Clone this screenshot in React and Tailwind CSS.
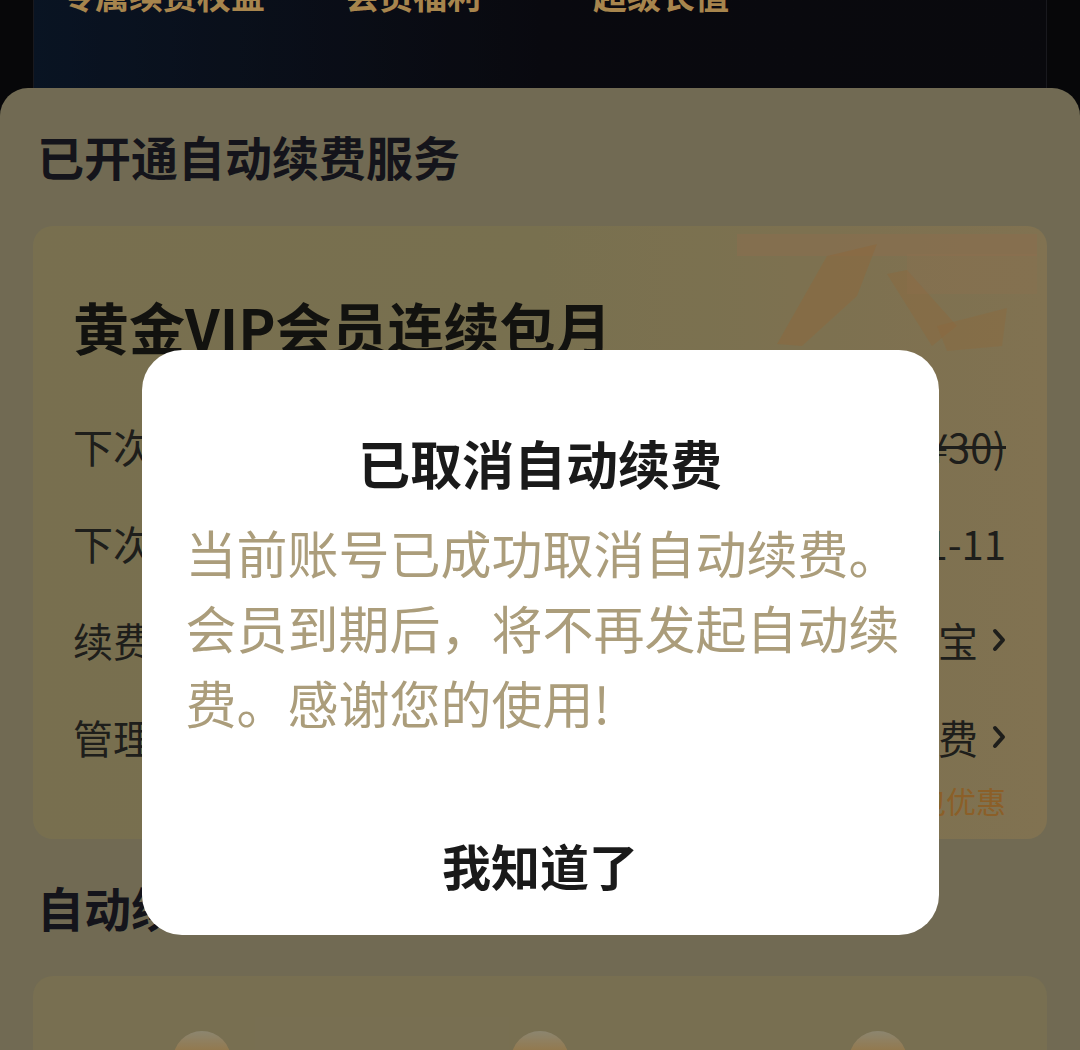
import React from 'react';

const rows = [
  { label: '下次续费金额', value: '¥25', strike: '(¥30)' },
  { label: '下次续费时间', value: '2025-01-11' },
  { label: '续费方式', value: '支付宝', arrow: true },
  { label: '管理自动续费', value: '取消自动续费', arrow: true },
];

const Chevron = () => (
  <svg width="14" height="24" viewBox="0 0 14 24" className="ml-[14px]">
    <polyline points="3,3 11,12 3,21" fill="none" stroke="#2b2b28" strokeWidth="4" strokeLinecap="round" strokeLinejoin="round" />
  </svg>
);

const CardDecor = () => (
  <svg width="340" height="140" viewBox="0 0 340 140" className="absolute right-0 top-0">
    <rect x="30" y="8" width="300" height="22" fill="#d09a70" opacity="0.35" />
    <polygon points="120,30 170,18 150,70 95,120 70,118" fill="#c8965a" opacity="0.55" />
    <polygon points="180,48 200,44 250,100 225,120" fill="#c8965a" opacity="0.5" />
    <polygon points="230,100 300,82 295,120 240,125" fill="#c8965a" opacity="0.45" />
    <rect x="200" y="28" width="130" height="40" fill="#d09a70" opacity="0.25" />
  </svg>
);

export default function App() {
  return (
    <div
      className="relative w-[1080px] h-[1050px] overflow-hidden bg-[#0b0b0e]"
      style={{ fontFamily: '"Noto Sans CJK SC", "Noto Sans", sans-serif' }}
    >
      {/* top banner (mostly scrolled off) */}
      <div className="h-[88px] px-[33px] overflow-hidden">
        <div className="h-[120px] overflow-hidden bg-gradient-to-r from-[#0e1d33] via-[#0e0e16] to-[#0e0e14] border-x border-[#24242c]">
          <div className="flex -mt-[22px] text-[34px] leading-[34px] font-bold text-[#f0bf6f]">
            <span className="ml-[27px]">专属续费权益</span>
            <span className="ml-[80px]">会员福利</span>
            <span className="ml-[112px]">超级长值</span>
          </div>
        </div>
      </div>

      {/* sheet */}
      <div className="relative rounded-t-[28px] bg-[#a29977] px-[33px] h-[1000px]">
        <h2 className="pt-[44px] pl-[4px] text-[47px] leading-[47px] font-bold text-[#1d1d28]">
          已开通自动续费服务
        </h2>

        <div className="relative mt-[47px] h-[613px] rounded-[20px] bg-gradient-to-r from-[#aca072] via-[#ada172] to-[#b9a474] pl-[40px] pr-[41px] overflow-hidden">
          <CardDecor />
          <div className="relative">
            <h3 className="pt-[72px] text-[56px] leading-[56px] font-bold text-[#1b1a16]">黄金VIP会员连续包月</h3>
            <div className="mt-[43px]">
              {rows.map((r) => (
                <div key={r.label} className="h-[97px] flex items-center justify-between text-[40px] leading-[40px] text-[#2b2b28]">
                  <span>{r.label}</span>
                  <span className="flex items-center">
                    {r.value}
                    {r.strike && <span className="ml-[10px] line-through decoration-[3px]">{r.strike}</span>}
                    {r.arrow && <Chevron />}
                  </span>
                </div>
              ))}
            </div>
            <p className="text-right text-[30px] leading-[30px] text-[#c8883a]">取消后将无法享受连续包月包优惠</p>
          </div>
        </div>

        <h2 className="mt-[44px] pl-[4px] text-[47px] leading-[47px] font-bold text-[#1d1d28]">自动续费特权</h2>

        <div className="mt-[46px] h-[200px] rounded-[20px] bg-[#ac9f75] grid grid-cols-3 justify-items-center pt-[55px]">
          {[0, 1, 2].map((i) => (
            <div key={i} className="w-[58px] h-[58px] rounded-full bg-gradient-to-b from-[#c9c0a0] via-[#d6a456] to-[#d39a4a]" />
          ))}
        </div>
      </div>

      {/* overlay + dialog */}
      <div className="absolute inset-0 bg-black/30 flex justify-center items-start pt-[350px]">
        <div className="w-[797px] rounded-[40px] bg-white pl-[44px] pr-[34px] pt-[87px] pb-[44px] text-center">
          <h1 className="pr-[10px] text-[52px] leading-[52px] font-bold text-[#1a1a1a]">已取消自动续费</h1>
          <p className="mt-[26px] text-left text-[51px] leading-[75px] text-[#ab9d7b]">
            当前账号已成功取消自动续费。会员到期后，将不再发起自动续费。感谢您的使用!
          </p>
          <button className="mt-[100px] pr-[10px] w-full text-[49px] leading-[49px] font-bold text-[#1a1a1a]">我知道了</button>
        </div>
      </div>
    </div>
  );
}
